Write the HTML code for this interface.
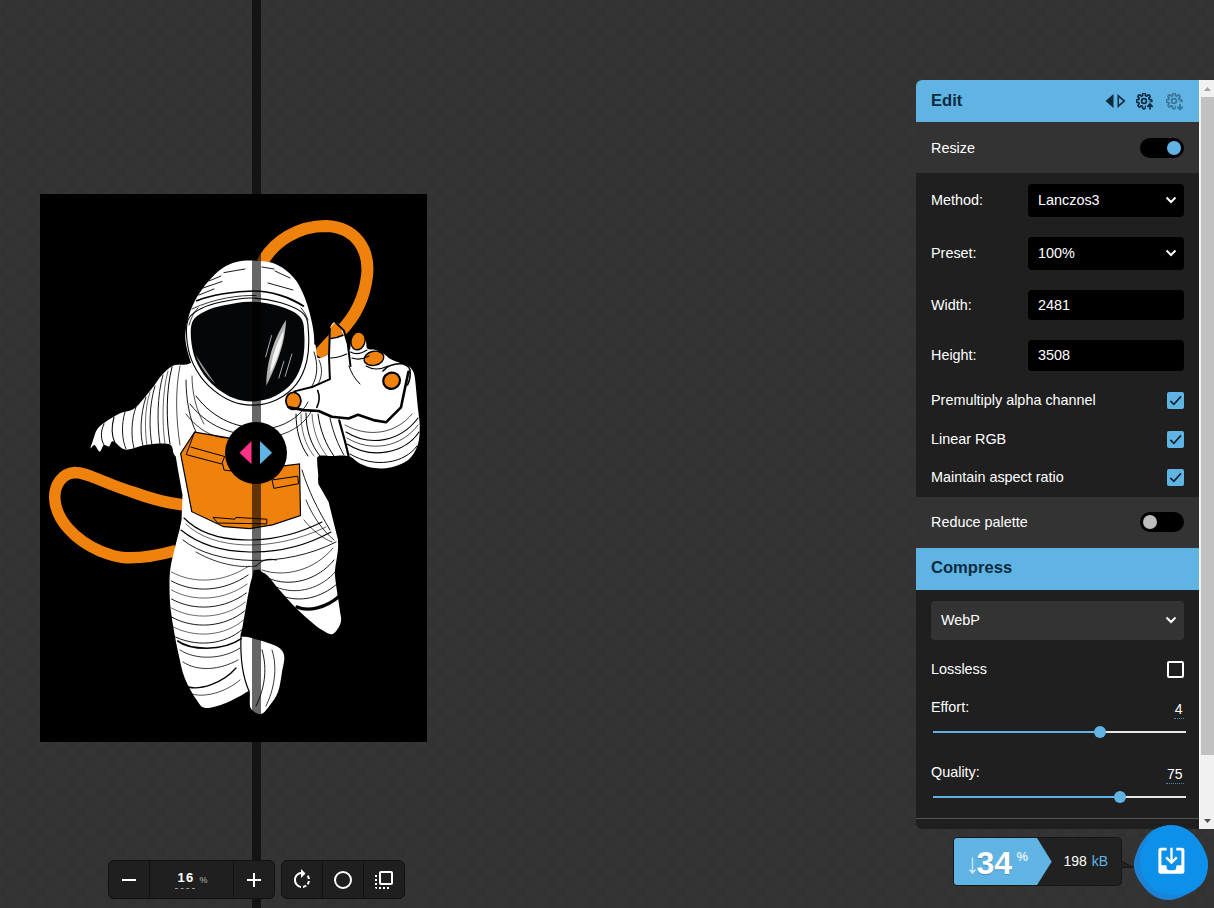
<!DOCTYPE html>
<html lang="en">
<head>
<meta charset="utf-8">
<title>Squoosh</title>
<style>
*{box-sizing:border-box;margin:0;padding:0}
html,body{width:1214px;height:908px;overflow:hidden}
body{position:relative;font-family:"Liberation Sans",Arial,sans-serif;font-size:14.4px;color:#fff;
 background:repeating-conic-gradient(#323232 0% 25%,#343434 0% 50%) 6px 7px / 20px 20px;}
.abs{position:absolute}
#divider{left:252px;top:0;width:9px;height:908px;background:rgba(0,0,0,.6)}
#art{left:40px;top:194px;width:387px;height:548px;background:#000;overflow:hidden}
#art svg{position:absolute;left:0;top:0}
#scrub{left:225px;top:422px;width:62px;height:62px;border-radius:50%;background:#000}
/* bottom controls */
.grp{display:flex;height:39px;top:860px;border-radius:6px;overflow:hidden;border:1px solid #111;background:#111}
.grp>div{background:#1f1f1f;height:37px;display:flex;align-items:center;justify-content:center;margin-right:1px}
.grp>div:last-child{margin-right:0}
.grp svg{width:24px;height:24px;fill:#fff;display:block}
#zoomval{font-weight:bold;font-size:13px;letter-spacing:1.2px}
/* panel */
#panel{left:916px;top:80px;width:298px;height:749px;border-radius:6px 0 0 6px;overflow:hidden;background:#1f1f1f}
.hdr{left:0;width:283px;height:42px;background:#5fb4e4;color:#0b2a40;font-weight:bold;font-size:16.6px;line-height:41px;padding-left:15px}
.row{left:0;width:283px;background:#333}
.lbl{left:15px;font-size:14.4px;line-height:16px;white-space:nowrap;color:#fff}
.sel{left:112px;width:156px;background:#000;border-radius:4px;padding-left:10px;font-size:14.4px;color:#fff}
.tog{left:224px;width:44px;height:20px;border-radius:10px;background:#000}
.tog i{position:absolute;top:3px;width:14px;height:14px;border-radius:50%}
.cb{left:251px;width:17px;height:17px;border-radius:2px;background:#5fb4e4}
.chev{position:absolute;right:7px;top:50%;margin-top:-5px;width:12px;height:8px}
.track{left:17px;width:253px;height:2px;background:#e6e6e6}
.track b{position:absolute;left:0;top:0;height:2px;background:#5fb4e4}
.knob{width:12px;height:12px;border-radius:50%;background:#5fb4e4}
.num{right:30.5px;font-size:14px;line-height:16px;color:#fff;border-bottom:1px dotted #4a89ad;padding:0 1px 1px 1px}
</style>
</head>
<body>
<div id="divider" class="abs"></div>
<div id="art" class="abs"><!--ARTSTART--><svg width="387" height="548" viewBox="40 194 387 548">
<rect x="40" y="194" width="387" height="548" fill="#000"/>
<path d="M262 263 C274 241 298 226 326 226 C356 227 370 250 367 276 C364 302 352 320 340 332 C332 340 324 348 318 356" fill="none" stroke="#ef820d" stroke-width="12"/>
<path d="M184 505 C165 503 150 498.500 132.500 492 C118 487.500 108 483 97.800 479 C88 475 82 472.500 74.700 472.500 C62 473.500 54 485 54.800 499 C56 520 75 540 100 551 C110 555 118 557.500 125.500 557.800 C145 558.500 160 555 176 550.500" fill="none" stroke="#ef820d" stroke-width="11.500"/>
<path d="M185.7 364.5 C182.1 365.0 176.5 364.1 172.5 365.9 C168.5 367.7 165.0 371.8 161.9 375.1 C158.8 378.4 157.1 381.7 154.0 385.7 C150.9 389.7 146.9 394.9 143.4 398.9 C139.9 402.9 136.8 407.1 132.8 409.5 C128.8 411.9 124.0 411.4 119.6 413.4 C115.2 415.4 110.1 418.6 106.4 421.3 C102.7 424.0 99.4 426.2 97.2 429.3 C95.0 432.4 94.3 436.6 93.2 439.8 C92.1 443.0 90.4 447.5 90.6 448.4 C90.8 449.3 93.0 444.6 94.5 445.1 C96.0 445.7 98.2 451.7 99.8 451.7 C101.3 451.7 102.2 446.0 103.8 445.1 C105.3 444.2 107.6 447.0 109.1 446.4 C110.6 445.8 110.6 440.8 113.0 441.2 C115.4 441.6 120.3 447.9 123.6 449.1 C126.9 450.3 128.6 449.2 132.8 448.4 C137.0 447.6 142.5 445.1 148.7 444.5 C154.9 443.9 165.4 442.6 169.8 444.5 C174.2 446.4 171.7 453.1 175.1 455.7 C178.5 458.3 183.8 467.6 190.0 460.0 C196.2 452.4 209.7 424.7 212.0 410.0 C214.3 395.3 207.0 379.8 204.0 372.0 C201.0 364.2 197.1 364.2 194.0 363.0 C190.9 361.8 189.3 364.0 185.7 364.5Z" fill="#fff"/>
<path d="M176.0 366.0 L172.0 420.0 L174.0 446.0 L178.0 470.0 L182.5 495.0 L181.5 521.0 L180.0 530.0 L196.0 562.0 L255.0 570.0 L322.0 562.0 L338.0 540.0 L328.6 502.0 L318.3 484.0 L317.0 458.0 L330.0 400.0 L300.0 380.0 L200.0 380.0Z" fill="#fff"/>
<path d="M215.0 514.0 C203.8 511.5 195.4 514.2 190.0 515.0 C184.6 515.8 184.2 516.5 182.5 519.0 C180.8 521.5 180.7 525.5 179.5 530.0 C178.3 534.5 176.8 540.1 175.3 546.3 C173.8 552.5 171.6 560.5 170.6 567.0 C169.6 573.5 169.5 578.6 169.5 585.6 C169.5 592.6 169.8 601.0 170.6 608.7 C171.4 616.4 172.8 624.1 174.1 631.8 C175.4 639.5 176.9 647.3 178.7 655.0 C180.5 662.7 181.8 670.7 184.7 678.0 C187.6 685.3 192.5 694.0 196.0 699.0 C199.5 704.0 200.5 707.3 205.5 708.0 C210.5 708.7 219.9 705.2 226.0 703.0 C232.1 700.8 238.1 696.8 242.0 695.0 C245.9 693.2 248.0 689.8 249.4 692.0 C250.8 694.2 248.7 704.3 250.6 708.0 C252.5 711.7 257.8 714.5 261.0 714.0 C264.2 713.5 267.2 708.7 270.0 705.0 C272.8 701.3 276.0 697.5 278.0 692.0 C280.0 686.5 281.0 678.2 282.0 672.0 C283.0 665.8 285.2 659.4 284.0 655.0 C282.8 650.6 280.8 648.5 275.0 645.6 C269.2 642.7 255.1 639.1 249.4 637.5 C243.7 635.9 242.2 637.8 241.0 636.0 C239.8 634.2 241.1 635.0 242.5 627.0 C243.9 619.0 247.5 597.8 249.4 588.0 C251.3 578.2 252.7 577.7 254.0 568.0 C255.3 558.3 263.5 539.0 257.0 530.0 C250.5 521.0 226.2 516.5 215.0 514.0Z" fill="#fff"/>
<path d="M250.0 530.0 C237.8 536.0 255.0 558.3 258.0 566.0 C261.0 573.7 264.4 572.0 268.0 576.0 C271.6 580.0 274.8 584.7 279.5 590.0 C284.2 595.3 290.6 602.6 296.0 608.0 C301.4 613.4 307.7 618.8 312.0 622.5 C316.3 626.2 318.6 628.1 322.0 630.0 C325.4 631.9 329.6 635.2 332.7 634.0 C335.8 632.8 339.5 626.7 340.7 622.5 C341.9 618.3 340.6 616.4 339.6 608.6 C338.7 600.9 336.4 589.1 335.0 576.0 C333.6 562.9 345.2 537.7 331.0 530.0 C316.8 522.3 262.2 524.0 250.0 530.0Z" fill="#fff"/>
<path d="M312.0 348.0 C317.5 336.0 315.2 357.3 318.0 358.0 C320.8 358.7 327.1 356.7 329.0 352.0 C330.9 347.3 328.4 335.0 329.5 330.0 C330.6 325.0 333.1 321.9 335.5 322.0 C337.9 322.1 341.9 327.0 343.9 330.6 C345.9 334.2 346.7 340.5 347.7 343.7 C348.7 346.9 349.4 350.6 350.0 350.0 C350.6 349.4 350.2 343.0 351.4 340.0 C352.6 337.0 354.7 332.0 357.0 332.0 C359.3 332.0 363.7 337.3 365.4 340.0 C367.1 342.7 365.7 346.8 367.3 348.4 C368.9 350.0 372.0 348.8 374.8 349.7 C377.6 350.6 381.5 352.5 384.0 354.0 C386.5 355.5 387.2 357.1 390.0 358.7 C392.8 360.2 397.9 362.1 401.0 363.3 C404.1 364.5 406.3 364.3 408.5 366.0 C410.7 367.7 412.8 369.8 414.0 373.6 C415.2 377.4 415.4 383.0 416.0 388.6 C416.6 394.2 417.2 401.1 417.8 407.3 C418.4 413.5 419.7 419.8 419.7 426.0 C419.7 432.2 419.7 439.1 417.8 444.7 C415.9 450.3 412.9 455.9 408.5 459.7 C404.1 463.4 397.2 465.8 391.6 467.2 C386.0 468.6 380.1 468.7 374.8 468.1 C369.5 467.5 364.2 465.4 359.8 463.4 C355.4 461.4 353.3 457.2 348.6 456.0 C343.9 454.8 337.1 455.7 331.8 456.0 C326.5 456.3 319.3 453.8 316.8 457.8 C314.3 461.8 321.3 478.0 316.8 480.0 C312.3 482.0 295.3 478.3 290.0 470.0 C284.7 461.7 281.3 450.3 285.0 430.0 C288.7 409.7 306.5 360.0 312.0 348.0Z" fill="#fff"/>
<path d="M329.9 379.2 C326.2 376.1 318.9 384.7 313.0 386.7 C307.1 388.7 299.0 389.2 294.3 391.4 C289.6 393.6 285.9 397.1 285.0 399.8 C284.1 402.5 285.6 405.6 288.7 407.3 C291.8 409.0 298.7 409.5 303.7 410.1 C308.7 410.7 313.5 411.9 318.7 411.0 C323.9 410.1 333.1 410.3 335.0 405.0 C336.9 399.7 333.6 382.2 329.9 379.2Z" fill="#fff"/>
<path d="M252.5 260.6 C258.3 260.7 265.6 260.9 271.0 262.4 C276.4 263.9 280.7 266.3 284.9 269.4 C289.1 272.5 293.1 276.3 296.4 280.9 C299.7 285.5 302.2 291.3 304.5 297.1 C306.8 302.9 308.8 309.4 310.3 315.6 C311.9 321.8 313.2 328.3 313.8 334.1 C314.4 339.9 314.4 344.9 313.8 350.3 C313.2 355.7 312.0 361.1 310.3 366.5 C308.6 371.9 306.9 377.7 303.4 382.7 C299.9 387.7 294.9 392.6 289.5 396.5 C284.1 400.4 277.2 403.9 271.0 405.8 C264.8 407.7 259.4 408.4 252.5 408.0 C245.6 407.6 236.7 406.6 229.4 403.5 C222.1 400.4 214.4 395.0 208.6 389.6 C202.8 384.2 198.2 377.7 194.7 371.1 C191.1 364.6 188.9 356.5 187.3 350.3 C185.8 344.1 185.1 339.9 185.4 334.1 C185.7 328.3 187.0 321.8 188.9 315.6 C190.8 309.4 193.7 302.9 197.0 297.1 C200.3 291.3 204.4 285.7 208.6 280.9 C212.8 276.1 217.8 271.3 222.4 268.2 C227.0 265.1 231.3 263.3 236.3 262.0 C241.3 260.7 246.7 260.5 252.5 260.6Z" fill="#fff"/>
<path d="M192.3 322.0 C194.5 316.7 199.4 314.2 204.7 311.4 C210.0 308.6 216.5 306.9 224.1 305.3 C231.7 303.7 241.4 301.6 250.5 301.7 C259.6 301.8 270.5 303.6 278.7 306.1 C286.9 308.6 295.6 312.0 299.9 316.7 C304.2 321.4 303.9 327.0 304.3 334.4 C304.8 341.8 304.5 352.9 302.6 360.8 C300.7 368.7 297.5 376.1 292.9 382.0 C288.3 387.9 281.7 392.9 275.2 396.1 C268.7 399.3 261.1 401.1 254.1 401.4 C247.1 401.7 240.0 400.8 232.9 397.8 C225.8 394.9 217.6 389.3 211.7 383.7 C205.8 378.1 201.0 371.1 197.6 364.3 C194.2 357.6 192.4 350.2 191.5 343.2 C190.6 336.1 190.1 327.3 192.3 322.0Z" fill="#050607"/>
<path d="M286 320 C285.500 337 281 356 266.400 385.500 C266 368 271 343 286 320Z" fill="#b4b4b4"/>
<path d="M284 330 C282.500 343 278 358 270 374 C271 360 275.500 345 284 330Z" fill="#f4f4f4"/>
<path d="M271.700 335.200 L265.500 357.300 M292 353.700 L285 376.700 M284 360.800 L278.700 378.400" stroke="#aaa" stroke-width="1" fill="none"/>
<path d="M195.900 355.500 C203 366 209 375 215.300 383.700 C207 376 200 366 195.900 355.500Z" fill="#999"/>
<path d="M194.6 432.1 L228.4 437.8 L283.6 465.9 L299.5 464.0 L300.5 515.5 L272.4 524.9 L250.0 528.6 L223.7 526.7 L191.8 511.7 L180.6 453.7Z" fill="#ef820d" stroke="#000" stroke-width="1.2"/>
<path d="M330.800 338 L330.500 327 L335.500 322.200 L341 329 L343.500 335 Z" fill="#ef820d"/>
<ellipse cx="358" cy="340.900" rx="7" ry="9" fill="#ef820d" stroke="#000" stroke-width="1.400" transform="rotate(15 358 340.900)"/>
<ellipse cx="373.900" cy="358.300" rx="10" ry="7" fill="#ef820d" stroke="#000" stroke-width="1.400" transform="rotate(-12 373.900 358.300)"/>
<ellipse cx="391.600" cy="380.700" rx="8.500" ry="8" fill="#ef820d" stroke="#000" stroke-width="2.200" transform="rotate(-25 391.600 380.700)"/>
<ellipse cx="293.400" cy="400.800" rx="7.500" ry="8.500" fill="#ef820d" stroke="#000" stroke-width="1.800"/>
<path d="M188.1 319.8 C190.5 314.1 195.7 311.4 201.4 308.4 C207.1 305.4 214.1 303.6 222.3 301.8 C230.5 300.1 240.9 297.8 250.7 298.0 C260.4 298.1 272.1 300.0 281.0 302.7 C289.8 305.4 299.2 309.0 303.8 314.1 C308.3 319.2 308.0 325.2 308.5 333.1 C309.0 341.0 308.7 353.0 306.7 361.5 C304.6 370.0 301.1 378.0 296.2 384.3 C291.3 390.6 284.2 396.0 277.2 399.4 C270.3 402.9 262.1 404.8 254.5 405.1 C246.9 405.4 239.3 404.4 231.7 401.3 C224.1 398.1 215.3 392.1 208.9 386.1 C202.6 380.1 197.4 372.5 193.8 365.3 C190.2 358.0 188.2 350.2 187.2 342.6 C186.3 335.0 185.7 325.5 188.1 319.8Z" fill="none" stroke="#000" stroke-width="1.1" stroke-linecap="round" stroke-linejoin="round" />
<path d="M196.800 300.800 C210 295 235 291 254 291 C270 291 290 297 303.400 306" fill="none" stroke="#000" stroke-width="1.6" stroke-linecap="round" stroke-linejoin="round" />
<path d="M192 309 C215 298 240 295 256 295.500" fill="none" stroke="#000" stroke-width="0.8" stroke-linecap="round" stroke-linejoin="round" />
<path d="M203 288 L222 281.500 M199 295 L214 289 M224 272.600 L245 269 M209 281 L221 276" fill="none" stroke="#000" stroke-width="0.9" stroke-linecap="round" stroke-linejoin="round" />
<path d="M268 283 L293 290 M289 299 L303 306 M275 271 L290 278 M262 267 L274 269" fill="none" stroke="#000" stroke-width="0.9" stroke-linecap="round" stroke-linejoin="round" />
<path d="M189 325 C191 318 194 312 198 308 M308 320 C306 315 304 311 301 308" fill="none" stroke="#000" stroke-width="0.8" stroke-linecap="round" stroke-linejoin="round" />
<path d="M329.900 328.700 L329 356.800 L329.900 379.200 L313 386.700 L294.300 391.400" fill="none" stroke="#000" stroke-width="2" stroke-linecap="round" stroke-linejoin="round" />
<path d="M335.500 322.200 L343.900 330.600 L347.700 343.700 L350.500 366" fill="none" stroke="#000" stroke-width="2" stroke-linecap="round" stroke-linejoin="round" />
<path d="M330.800 338.500 Q337 338 343 335.300" fill="none" stroke="#000" stroke-width="1.5" stroke-linecap="round" stroke-linejoin="round" />
<path d="M329.900 358 Q338 358 346.700 354" fill="none" stroke="#000" stroke-width="1.2" stroke-linecap="round" stroke-linejoin="round" />
<path d="M288.700 407.300 L303.700 410.100 L318.700 411 L331.800 416.700 L348.600 418.500 L358 414.800 L374.800 420.400 L386 422.300 L401 407.300 L405.700 384.800 L408.500 371.800" fill="none" stroke="#000" stroke-width="2.6" stroke-linecap="round" stroke-linejoin="round" />
<path d="M317.700 390.500 Q321 399 316.800 407.300" fill="none" stroke="#000" stroke-width="1.6" stroke-linecap="round" stroke-linejoin="round" />
<path d="M339.200 420.400 L344.900 441 L348.600 456" fill="none" stroke="#000" stroke-width="2.2" stroke-linecap="round" stroke-linejoin="round" />
<path d="M350.500 352 Q358 356 367 350 M352 358 Q360 361 369 356" fill="none" stroke="#000" stroke-width="1.1" stroke-linecap="round" stroke-linejoin="round" />
<path d="M366 366 Q376 372 388 366" fill="none" stroke="#000" stroke-width="1.1" stroke-linecap="round" stroke-linejoin="round" />
<path d="M383 371 Q388 364 401 363.500 Q409 365 410 370 Q411 378 407.500 385" fill="none" stroke="#000" stroke-width="1.6" stroke-linecap="round" stroke-linejoin="round" />
<path d="M349 366 Q352 376 360 384" fill="none" stroke="#000" stroke-width="1" stroke-linecap="round" stroke-linejoin="round" />
<path d="M346 432 C370 447 400 442 418 418" fill="none" stroke="#000" stroke-width="1.1" stroke-linecap="round" stroke-linejoin="round" />
<path d="M347 444 C372 460 405 453 419 432" fill="none" stroke="#000" stroke-width="1.1" stroke-linecap="round" stroke-linejoin="round" />
<path d="M350 454 C375 469 405 463 417 446" fill="none" stroke="#000" stroke-width="1" stroke-linecap="round" stroke-linejoin="round" />
<path d="M345 425 C368 438 396 434 412 414" fill="none" stroke="#000" stroke-width="0.7" stroke-linecap="round" stroke-linejoin="round" />
<path d="M347 438 C371 453 402 447 418 425" fill="none" stroke="#000" stroke-width="0.7" stroke-linecap="round" stroke-linejoin="round" />
<path d="M296 414 C296 430 300 445 308 456" fill="none" stroke="#000" stroke-width="1" stroke-linecap="round" stroke-linejoin="round" />
<path d="M306 413 C306 430 311 445 320 456" fill="none" stroke="#000" stroke-width="1" stroke-linecap="round" stroke-linejoin="round" />
<path d="M318 414 C320 430 326 445 334 456" fill="none" stroke="#000" stroke-width="1" stroke-linecap="round" stroke-linejoin="round" />
<path d="M330 418 C333 432 338 445 344 455" fill="none" stroke="#000" stroke-width="0.9" stroke-linecap="round" stroke-linejoin="round" />
<path d="M301 414 C301 430 305 445 314 456" fill="none" stroke="#000" stroke-width="0.6" stroke-linecap="round" stroke-linejoin="round" />
<path d="M312 414 C313 430 318 445 327 456" fill="none" stroke="#000" stroke-width="0.6" stroke-linecap="round" stroke-linejoin="round" />
<path d="M314 352 C318 364 318 376 312 386" fill="none" stroke="#000" stroke-width="0.9" stroke-linecap="round" stroke-linejoin="round" />
<path d="M319 360 C323 368 322 378 318 384" fill="none" stroke="#000" stroke-width="0.8" stroke-linecap="round" stroke-linejoin="round" />
<path d="M172 367 C166 390 166 420 170 444" fill="none" stroke="#000" stroke-width="1" stroke-linecap="round" stroke-linejoin="round" />
<path d="M163 375 C157 395 157 425 160 444" fill="none" stroke="#000" stroke-width="0.9" stroke-linecap="round" stroke-linejoin="round" />
<path d="M155 386 C149 405 149 430 152 445" fill="none" stroke="#000" stroke-width="0.9" stroke-linecap="round" stroke-linejoin="round" />
<path d="M146 397 C140 415 140 435 143 446" fill="none" stroke="#000" stroke-width="0.9" stroke-linecap="round" stroke-linejoin="round" />
<path d="M136 407 C131 420 131 438 134 448" fill="none" stroke="#000" stroke-width="0.9" stroke-linecap="round" stroke-linejoin="round" />
<path d="M125 412 C121 425 122 440 126 449" fill="none" stroke="#000" stroke-width="0.9" stroke-linecap="round" stroke-linejoin="round" />
<path d="M114 417 C111 428 112 437 115 443" fill="none" stroke="#000" stroke-width="1.1" stroke-linecap="round" stroke-linejoin="round" />
<path d="M104 424 C100 432 101 440 104 445" fill="none" stroke="#000" stroke-width="1" stroke-linecap="round" stroke-linejoin="round" />
<path d="M180 366 C175 390 176 420 180 445" fill="none" stroke="#000" stroke-width="0.7" stroke-linecap="round" stroke-linejoin="round" />
<path d="M168 371 C162 392 162 423 165 444" fill="none" stroke="#000" stroke-width="0.6" stroke-linecap="round" stroke-linejoin="round" />
<path d="M150 392 C144 410 145 432 147 446" fill="none" stroke="#000" stroke-width="0.6" stroke-linecap="round" stroke-linejoin="round" />
<path d="M196 396 C214 420 240 430 264 427" fill="none" stroke="#000" stroke-width="1" stroke-linecap="round" stroke-linejoin="round" />
<path d="M190 404 C210 430 240 438 268 434" fill="none" stroke="#000" stroke-width="0.9" stroke-linecap="round" stroke-linejoin="round" />
<path d="M186 414 C200 432 215 438 228 438" fill="none" stroke="#000" stroke-width="0.8" stroke-linecap="round" stroke-linejoin="round" />
<path d="M272 428 C290 424 302 414 308 402" fill="none" stroke="#000" stroke-width="0.9" stroke-linecap="round" stroke-linejoin="round" />
<path d="M276 436 C294 432 306 422 312 410" fill="none" stroke="#000" stroke-width="0.8" stroke-linecap="round" stroke-linejoin="round" />
<path d="M186 380 C186 400 190 420 196 432" fill="none" stroke="#000" stroke-width="0.9" stroke-linecap="round" stroke-linejoin="round" />
<path d="M192 376 C192 392 196 410 204 424" fill="none" stroke="#000" stroke-width="0.7" stroke-linecap="round" stroke-linejoin="round" />
<path d="M194.600 432.100 L186.200 454.600 L221.800 464 L224.600 456.500 M190.900 447.100 L224.600 456.500 M222.700 464 L224 470 L231 471" fill="none" stroke="#000" stroke-width="1" stroke-linecap="round" stroke-linejoin="round" />
<path d="M272.400 479.900 L297.700 476.200 L298.600 483.700 L274.300 488.300 Z" fill="none" stroke="#000" stroke-width="1" stroke-linecap="round" stroke-linejoin="round" />
<path d="M213.400 517.400 L234.900 519.200 L235.900 517.400 L266.800 519.200 L266.800 523.900 L218.100 523 Z" fill="none" stroke="#000" stroke-width="1" stroke-linecap="round" stroke-linejoin="round" />
<path d="M302 470 C308 490 318 510 330 530" fill="none" stroke="#000" stroke-width="0.9" stroke-linecap="round" stroke-linejoin="round" />
<path d="M306 500 C312 515 322 530 334 540" fill="none" stroke="#000" stroke-width="0.8" stroke-linecap="round" stroke-linejoin="round" />
<path d="M304 520 C312 530 322 538 332 542" fill="none" stroke="#000" stroke-width="0.7" stroke-linecap="round" stroke-linejoin="round" />
<path d="M184 518 C210 545 270 548 322 522" fill="none" stroke="#000" stroke-width="1.1" stroke-linecap="round" stroke-linejoin="round" />
<path d="M181 530 C215 558 280 560 331 532" fill="none" stroke="#000" stroke-width="1.1" stroke-linecap="round" stroke-linejoin="round" />
<path d="M183 540 C215 566 285 568 336 542" fill="none" stroke="#000" stroke-width="0.9" stroke-linecap="round" stroke-linejoin="round" />
<path d="M186 524 C212 550 272 553 326 527" fill="none" stroke="#000" stroke-width="0.6" stroke-linecap="round" stroke-linejoin="round" />
<path d="M196 552 C220 566 245 568 256 566" fill="none" stroke="#000" stroke-width="0.8" stroke-linecap="round" stroke-linejoin="round" />
<path d="M171.5 572 C195 585 225 582 249.0 566" fill="none" stroke="#000" stroke-width="0.6" stroke-linecap="round" stroke-linejoin="round" />
<path d="M171.5 581 C195 594 225 591 248.1 575" fill="none" stroke="#000" stroke-width="0.9" stroke-linecap="round" stroke-linejoin="round" />
<path d="M171.5 590 C195 603 225 600 247.2 584" fill="none" stroke="#000" stroke-width="0.6" stroke-linecap="round" stroke-linejoin="round" />
<path d="M171.5 599 C195 612 225 609 246.3 593" fill="none" stroke="#000" stroke-width="0.9" stroke-linecap="round" stroke-linejoin="round" />
<path d="M171.5 608 C195 621 225 618 245.4 602" fill="none" stroke="#000" stroke-width="0.6" stroke-linecap="round" stroke-linejoin="round" />
<path d="M171.5 617 C195 630 225 627 244.5 611" fill="none" stroke="#000" stroke-width="0.9" stroke-linecap="round" stroke-linejoin="round" />
<path d="M171.5 626 C195 639 225 636 243.6 620" fill="none" stroke="#000" stroke-width="0.6" stroke-linecap="round" stroke-linejoin="round" />
<path d="M171.5 635 C195 648 225 645 242.7 629" fill="none" stroke="#000" stroke-width="0.9" stroke-linecap="round" stroke-linejoin="round" />
<path d="M177.700 641 C190 650 222 652 241.300 638.700" fill="none" stroke="#000" stroke-width="1.6" stroke-linecap="round" stroke-linejoin="round" />
<path d="M180 650 C195 660 222 660 240 648" fill="none" stroke="#000" stroke-width="0.8" stroke-linecap="round" stroke-linejoin="round" />
<path d="M183 662 C198 672 220 670 238 660" fill="none" stroke="#000" stroke-width="0.8" stroke-linecap="round" stroke-linejoin="round" />
<path d="M188 687 C200 690 222 684 236 668" fill="none" stroke="#000" stroke-width="1.3" stroke-linecap="round" stroke-linejoin="round" />
<path d="M192 694 C205 698 226 692 240 680" fill="none" stroke="#000" stroke-width="0.7" stroke-linecap="round" stroke-linejoin="round" />
<path d="M241 636 C240 660 244 680 249.400 692" fill="none" stroke="#000" stroke-width="1.2" stroke-linecap="round" stroke-linejoin="round" />
<path d="M262 650 C268 670 264 690 256 706" fill="none" stroke="#000" stroke-width="0.9" stroke-linecap="round" stroke-linejoin="round" />
<path d="M272 650 C278 668 274 690 266 706" fill="none" stroke="#000" stroke-width="0.8" stroke-linecap="round" stroke-linejoin="round" />
<path d="M268 578 C290 588 318 580 334 560" fill="none" stroke="#000" stroke-width="0.9" stroke-linecap="round" stroke-linejoin="round" />
<path d="M276 587 C297 596 322 588 336 571" fill="none" stroke="#000" stroke-width="0.8" stroke-linecap="round" stroke-linejoin="round" />
<path d="M285 597 C305 603 325 595 338 583" fill="none" stroke="#000" stroke-width="0.9" stroke-linecap="round" stroke-linejoin="round" />
<path d="M262 570 C285 578 315 570 333 548" fill="none" stroke="#000" stroke-width="0.7" stroke-linecap="round" stroke-linejoin="round" />
<path d="M297 607 C308 612 326 608 339.500 596" fill="none" stroke="#000" stroke-width="3.2" stroke-linecap="round" stroke-linejoin="round" />
<path d="M256 566 C262 560 268 558 276 560" fill="none" stroke="#000" stroke-width="1" stroke-linecap="round" stroke-linejoin="round" />
</svg><!--ARTEND--></div>
<div id="divider2" class="abs" style="left:252px;top:194px;width:9px;height:548px;background:rgba(0,0,0,.6)"></div>
<div id="scrub" class="abs">
 <svg width="62" height="62" viewBox="-0.5 -0.300 62 62" style="display:block"><polygon points="14,30.400 26,18.800 26,41.900" fill="#ff3385"/><polygon points="34.500,18.800 34.500,41.900 46.600,30.400" fill="#5fb4e4"/></svg>
</div>

<!-- zoom controls -->
<div class="abs grp" style="left:108px;width:167px">
 <div style="width:40px"><svg viewBox="0 0 24 24"><path d="M19 13H5v-2h14v2z"/></svg></div>
 <div style="width:83px"><span id="zoomval" style="position:relative;left:-1px;border-bottom:1px dashed #999;padding:0 1px 3px 3px;margin-right:3px">16</span><span style="font-size:9px;color:#b4b4b4;position:relative;top:0px">%</span></div>
 <div style="width:40px"><svg viewBox="0 0 24 24"><path d="M19 13h-6v6h-2v-6H5v-2h6V5h2v6h6v2z"/></svg></div>
</div>
<div class="abs grp" style="left:281px;width:124px">
 <div style="width:40px"><svg viewBox="0 0 24 24"><path d="M15.55 5.55L11 1v3.07C7.06 4.56 4 7.92 4 12s3.050 7.440 7 7.930v-2.020c-2.840-.480-5-2.940-5-5.910s2.160-5.430 5-5.910V10l4.550-4.450zM19.930 11c-.170-1.390-.720-2.730-1.620-3.890l-1.420 1.420c.540.750.880 1.600 1.020 2.470h2.020zM13 17.900v2.020c1.390-.170 2.740-.710 3.900-1.610l-1.440-1.440c-.750.540-1.590.890-2.460 1.030zm3.890-2.420l1.420 1.410c.9-1.160 1.450-2.500 1.620-3.890h-2.020c-.140.870-.480 1.720-1.020 2.480z"/></svg></div>
 <div style="width:40px"><svg viewBox="0 0 24 24"><circle cx="12" cy="12" r="8" fill="none" stroke="#fff" stroke-width="2"/></svg></div>
 <div style="width:40px"><svg viewBox="0 0 24 24"><path d="M3 13h2v-2H3v2zm0 4h2v-2H3v2zm2 4v-2H3c0 1.100.9 2 2 2zM3 9h2V7H3v2zm12 12h2v-2h-2v2zm4-18H9a2 2 0 0 0-2 2v10c0 1.100.9 2 2 2h10a2 2 0 0 0 2-2V5a2 2 0 0 0-2-2zm0 12H9V5h10v10zm-8 6h2v-2h-2v2zm-4 0h2v-2H7v2z"/></svg></div>
</div>

<!-- right panel -->
<div id="panel" class="abs">
 <div class="abs hdr" style="top:0">Edit</div>
 <svg class="abs" style="left:186.500px;top:9px" width="24" height="24" viewBox="0 0 24 24"><path d="M10.500 5 L2.500 12 L10.500 19Z M14.500 5v14l8-7-8-7zm1.500 3.500 4 3.500-4 3.500V8.500z" fill="#0b2a40" fill-rule="evenodd"/></svg>
 <svg class="abs" style="left:219px;top:12px" width="20" height="20" viewBox="0 0 20 20"><defs><clipPath id="gc"><path d="M0 0H20V9.300H9.800V20H0Z"/></clipPath></defs><g transform="translate(1,1)" fill="none" stroke="#0b2a40" stroke-width="1.700"><path clip-path="url(#gc)" d="M6.54 2.49 C6.88 1.99 6.30 0.97 6.83 0.59 C7.35 0.21 8.65 0.21 9.17 0.59 C9.70 0.97 9.12 1.99 9.46 2.49 C9.80 2.99 10.27 3.18 10.86 3.07 C11.45 2.96 11.77 1.83 12.41 1.93 C13.05 2.04 13.96 2.95 14.07 3.59 C14.17 4.23 13.04 4.55 12.93 5.14 C12.82 5.73 13.01 6.20 13.51 6.54 C14.01 6.88 15.03 6.30 15.41 6.83 C15.79 7.35 15.79 8.65 15.41 9.17 C15.03 9.70 14.01 9.12 13.51 9.46 C13.01 9.80 12.82 10.27 12.93 10.86 C13.04 11.45 14.17 11.77 14.07 12.41 C13.96 13.05 13.05 13.96 12.41 14.07 C11.77 14.17 11.45 13.04 10.86 12.93 C10.27 12.82 9.80 13.01 9.46 13.51 C9.12 14.01 9.70 15.03 9.17 15.41 C8.65 15.79 7.35 15.79 6.83 15.41 C6.30 15.03 6.88 14.01 6.54 13.51 C6.20 13.01 5.73 12.82 5.14 12.93 C4.55 13.04 4.23 14.17 3.59 14.07 C2.95 13.96 2.04 13.05 1.93 12.41 C1.83 11.77 2.96 11.45 3.07 10.86 C3.18 10.27 2.99 9.80 2.49 9.46 C1.99 9.12 0.97 9.70 0.59 9.17 C0.21 8.65 0.21 7.35 0.59 6.83 C0.97 6.30 1.99 6.88 2.49 6.54 C2.99 6.20 3.18 5.73 3.07 5.14 C2.96 4.55 1.83 4.23 1.93 3.59 C2.04 2.95 2.95 2.04 3.59 1.93 C4.23 1.83 4.55 2.96 5.14 3.07 C5.73 3.18 6.20 2.99 6.54 2.49Z"/><circle cx="8" cy="8" r="2.400"/><path d="M14 16.500V11.600M11.300 13.800L14 11.100L16.700 13.800" stroke-width="1.800"/></g></svg>
 <svg class="abs" style="left:249px;top:12px;opacity:.45" width="20" height="20" viewBox="0 0 20 20"><g transform="translate(1,1)" fill="none" stroke="#0b2a40" stroke-width="1.700"><path clip-path="url(#gc)" d="M6.54 2.49 C6.88 1.99 6.30 0.97 6.83 0.59 C7.35 0.21 8.65 0.21 9.17 0.59 C9.70 0.97 9.12 1.99 9.46 2.49 C9.80 2.99 10.27 3.18 10.86 3.07 C11.45 2.96 11.77 1.83 12.41 1.93 C13.05 2.04 13.96 2.95 14.07 3.59 C14.17 4.23 13.04 4.55 12.93 5.14 C12.82 5.73 13.01 6.20 13.51 6.54 C14.01 6.88 15.03 6.30 15.41 6.83 C15.79 7.35 15.79 8.65 15.41 9.17 C15.03 9.70 14.01 9.12 13.51 9.46 C13.01 9.80 12.82 10.27 12.93 10.86 C13.04 11.45 14.17 11.77 14.07 12.41 C13.96 13.05 13.05 13.96 12.41 14.07 C11.77 14.17 11.45 13.04 10.86 12.93 C10.27 12.82 9.80 13.01 9.46 13.51 C9.12 14.01 9.70 15.03 9.17 15.41 C8.65 15.79 7.35 15.79 6.83 15.41 C6.30 15.03 6.88 14.01 6.54 13.51 C6.20 13.01 5.73 12.82 5.14 12.93 C4.55 13.04 4.23 14.17 3.59 14.07 C2.95 13.96 2.04 13.05 1.93 12.41 C1.83 11.77 2.96 11.45 3.07 10.86 C3.18 10.27 2.99 9.80 2.49 9.46 C1.99 9.12 0.97 9.70 0.59 9.17 C0.21 8.65 0.21 7.35 0.59 6.83 C0.97 6.30 1.99 6.88 2.49 6.54 C2.99 6.20 3.18 5.73 3.07 5.14 C2.96 4.55 1.83 4.23 1.93 3.59 C2.04 2.95 2.95 2.04 3.59 1.93 C4.23 1.83 4.55 2.96 5.14 3.07 C5.73 3.18 6.20 2.99 6.54 2.49Z"/><circle cx="8" cy="8" r="2.400"/><path d="M14 11V15.900M11.300 13.700L14 16.400L16.700 13.700" stroke-width="1.800"/></g></svg>
 <div class="abs row" style="top:42px;height:51px"></div>
 <div class="abs lbl" style="top:60px">Resize</div>
 <div class="abs tog" style="top:58px"><i style="left:27px;background:#5fb4e4"></i></div>

 <div class="abs lbl" style="top:112px">Method:</div>
 <div class="abs sel" style="top:104px;height:33px;line-height:33px">Lanczos3<svg class="chev" viewBox="0 0 12 8"><path d="M1.500 1.500 L6 6 L10.500 1.500" fill="none" stroke="#fff" stroke-width="2"/></svg></div>
 <div class="abs lbl" style="top:165px">Preset:</div>
 <div class="abs sel" style="top:157px;height:33px;line-height:33px">100%<svg class="chev" viewBox="0 0 12 8"><path d="M1.500 1.500 L6 6 L10.500 1.500" fill="none" stroke="#fff" stroke-width="2"/></svg></div>
 <div class="abs lbl" style="top:217px">Width:</div>
 <div class="abs sel" style="top:210px;height:30px;line-height:30px">2481</div>
 <div class="abs lbl" style="top:267px">Height:</div>
 <div class="abs sel" style="top:260px;height:31px;line-height:31px">3508</div>

 <div class="abs lbl" style="top:312px">Premultiply alpha channel</div>
 <div class="abs cb" style="top:312px"><svg width="17" height="17" viewBox="0 0 18 18"><path d="M3.500 9.300 L7.300 13 L14.800 4.600" fill="none" stroke="#10222e" stroke-width="1.800"/></svg></div>
 <div class="abs lbl" style="top:351px">Linear RGB</div>
 <div class="abs cb" style="top:351px"><svg width="17" height="17" viewBox="0 0 18 18"><path d="M3.500 9.300 L7.300 13 L14.800 4.600" fill="none" stroke="#10222e" stroke-width="1.800"/></svg></div>
 <div class="abs lbl" style="top:389px">Maintain aspect ratio</div>
 <div class="abs cb" style="top:389px"><svg width="17" height="17" viewBox="0 0 18 18"><path d="M3.500 9.300 L7.300 13 L14.800 4.600" fill="none" stroke="#10222e" stroke-width="1.800"/></svg></div>

 <div class="abs row" style="top:417px;height:51px"></div>
 <div class="abs lbl" style="top:434px">Reduce palette</div>
 <div class="abs tog" style="top:432px"><i style="left:3px;background:#bdbdbd"></i></div>

 <div class="abs hdr" style="top:468px;line-height:40.500px">Compress</div>
 <div class="abs sel" style="left:15px;width:253px;top:521px;height:39px;line-height:39px;background:#333">WebP<svg class="chev" viewBox="0 0 12 8"><path d="M1.500 1.500 L6 6 L10.500 1.500" fill="none" stroke="#fff" stroke-width="2"/></svg></div>
 <div class="abs lbl" style="top:581px">Lossless</div>
 <div class="abs cb" style="top:581px;background:#1f1f1f;border:2px solid #fff"></div>

 <div class="abs lbl" style="top:619px">Effort:</div>
 <div class="abs num" style="top:621px">4</div>
 <div class="abs track" style="top:651px"><b style="width:166px"></b></div>
 <div class="abs knob" style="left:177.500px;top:646px"></div>
 <div class="abs lbl" style="top:684px">Quality:</div>
 <div class="abs num" style="top:686px">75</div>
 <div class="abs track" style="top:716px"><b style="width:186px"></b></div>
 <div class="abs knob" style="left:198px;top:711px"></div>
 <div class="abs" style="left:0;top:738px;width:283px;height:1px;background:#555"></div>

 <!-- scrollbar -->
 <div class="abs" style="left:283px;top:0;width:15px;height:749px;background:#f1f1f1;border-left:1px solid #fff"></div>
 <div class="abs" style="left:285px;top:17px;width:13px;height:658px;background:#c1c1c1"></div>
 <svg class="abs" style="left:283px;top:0" width="15" height="17" viewBox="0 0 15 17"><path d="M5 11 L8.500 7 L12 11 Z" fill="#a3a3a3"/></svg>
 <svg class="abs" style="left:283px;top:732px" width="15" height="17" viewBox="0 0 15 17"><path d="M5 7 L12 7 L8.500 11 Z" fill="#505050"/></svg>
</div>

<!-- results -->
<svg class="abs" style="left:949px;top:834px" width="190" height="56" viewBox="950 834 190 56">
 <path d="M958.500 837.500H1118.500Q1122.500 837.500 1122.500 841.500V861.300L1134.500 867.500H1122.500V881.500Q1122.500 885.500 1118.500 885.500H958.500Q954.500 885.500 954.500 881.500V841.500Q954.500 837.500 958.500 837.500Z" fill="#212121" stroke="#161616" stroke-width="1"/>
 <path d="M958 838H1038L1052.700 861.800L1038 885H958Q955 885 955 882V841Q955 838 958 838Z" fill="#5fb4e4"/>
</svg>
<div class="abs" style="left:965.500px;top:846px;font-size:28px;line-height:36px;color:rgba(255,255,255,.75);">↓</div>
<div class="abs" id="pct" style="left:976.500px;top:845px;font-size:32px;line-height:36px;font-weight:bold;color:#fff;text-shadow:0 1px 1px rgba(0,0,0,.2)">34</div>
<div class="abs" style="left:1016.500px;top:849px;font-size:13px;line-height:16px;font-weight:bold;color:rgba(255,255,255,.8)">%</div>
<div class="abs" style="left:1063.500px;top:853px;font-size:14px;line-height:16px;color:#fff;white-space:nowrap">198 <span style="color:#5fb4e4;margin-left:1px">kB</span></div>
<svg class="abs" style="left:1128px;top:820px" width="86" height="88" viewBox="1128 820 86 88">
 <path d="M1169.2 825.2 C1172.7 825.0 1176.0 825.2 1179.4 826.3 C1182.8 827.3 1186.6 829.2 1189.6 831.4 C1192.7 833.6 1195.4 836.5 1197.8 839.6 C1200.2 842.6 1202.3 846.4 1204.0 849.8 C1205.6 853.2 1207.0 856.8 1207.5 860.1 C1208.1 863.3 1208.0 866.2 1207.5 869.3 C1207.1 872.3 1206.3 875.8 1205.0 878.5 C1203.7 881.2 1202.1 883.4 1199.9 885.7 C1197.7 887.9 1194.7 889.9 1191.7 891.8 C1188.6 893.7 1184.9 895.6 1181.4 896.9 C1178.0 898.2 1174.3 899.4 1171.2 899.8 C1168.1 900.2 1165.7 900.0 1163.0 899.5 C1160.3 898.9 1157.4 897.8 1154.8 896.4 C1152.3 895.0 1149.8 893.2 1147.6 891.3 C1145.5 889.3 1143.8 887.1 1142.0 884.6 C1140.2 882.2 1138.2 879.2 1136.9 876.4 C1135.6 873.7 1134.6 871.0 1134.1 868.2 C1133.7 865.5 1133.9 862.8 1134.3 860.1 C1134.8 857.3 1135.7 854.8 1136.9 851.9 C1138.1 849.0 1139.5 845.7 1141.5 842.6 C1143.5 839.6 1145.9 835.9 1148.7 833.4 C1151.4 831.0 1154.5 829.2 1157.9 827.8 C1161.3 826.4 1165.6 825.5 1169.2 825.2Z" fill="#1c82d6"/>
 <path d="M1169.2 825.2 C1172.4 825.1 1176.0 825.2 1179.4 826.3 C1182.8 827.3 1186.6 829.2 1189.6 831.4 C1192.7 833.6 1195.4 836.5 1197.8 839.6 C1200.2 842.6 1202.3 846.4 1204.0 849.8 C1205.6 853.2 1207.0 856.8 1207.5 860.1 C1208.1 863.3 1208.0 866.2 1207.5 869.3 C1207.1 872.3 1206.3 875.8 1205.0 878.5 C1203.7 881.2 1202.1 883.5 1199.9 885.7 C1197.7 887.8 1194.7 889.8 1191.7 891.3 C1188.6 892.7 1184.9 893.8 1181.4 894.4 C1178.0 895.0 1174.6 895.0 1171.2 894.9 C1167.8 894.7 1164.0 894.4 1161.0 893.3 C1157.9 892.3 1155.2 890.7 1152.8 888.7 C1150.4 886.8 1148.4 884.1 1146.6 881.6 C1144.8 879.0 1143.1 876.3 1142.0 873.4 C1140.9 870.5 1140.2 867.1 1140.0 864.2 C1139.7 861.2 1140.1 858.7 1140.5 856.0 C1140.9 853.2 1141.5 850.5 1142.5 847.8 C1143.6 845.0 1145.1 842.1 1146.6 839.6 C1148.2 837.0 1149.5 834.5 1151.7 832.4 C1154.0 830.4 1157.0 828.5 1159.9 827.3 C1162.8 826.1 1165.9 825.4 1169.2 825.2Z" fill="#0d90ea"/>
 <g transform="translate(1158.400,847.800)">
  <path fill-rule="evenodd" fill="#fff" d="M2.500 0H8.200V2.600H3V17.400H7.200Q8.200 17.400 8.200 18.400V19.500Q8.200 22.500 11.200 22.500H14.900Q17.900 22.500 17.900 19.500V18.400Q17.900 17.400 18.900 17.400H23V2.600H17.900V0H23.500Q26 0 26 2.500V23.500Q26 26 23.500 26H2.500Q0 26 0 23.500V2.500Q0 0 2.500 0Z"/>
  <path d="M13.100 0V14 M7.800 9.600L13.100 14.900L18.400 9.600" fill="none" stroke="#fff" stroke-width="2.300"/>
 </g>
</svg>
</body>
</html>
